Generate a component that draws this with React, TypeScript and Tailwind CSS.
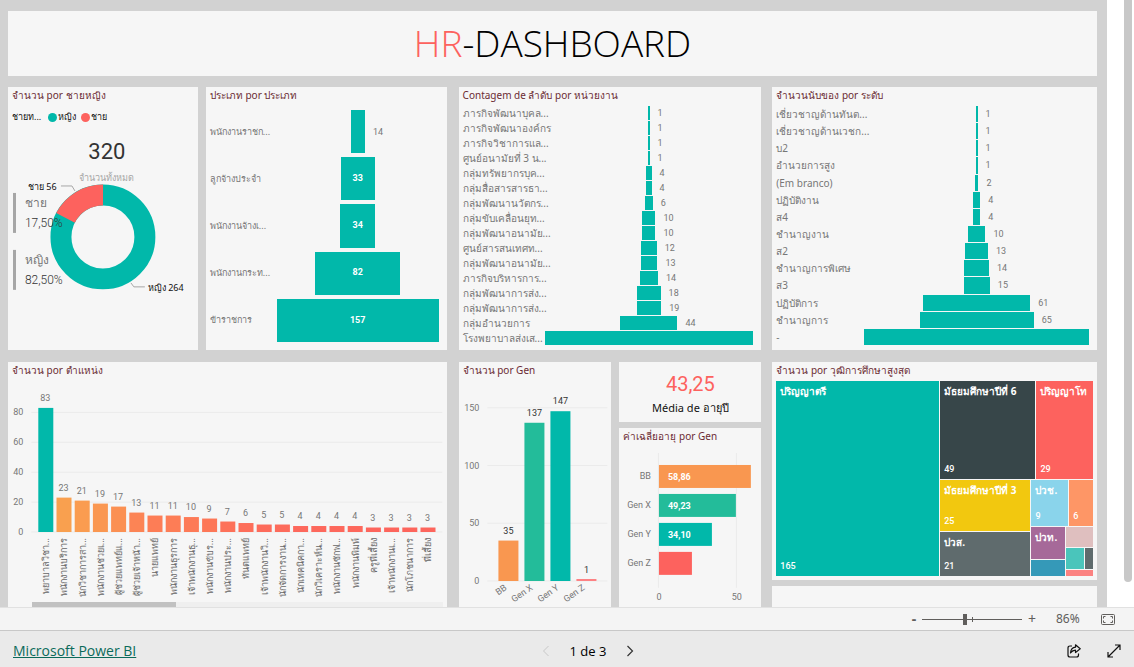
import type { ReactNode } from 'react';

const SANS = "font-['Noto_Sans','Open_Sans',sans-serif]";

type Row = { label: string; value: number; inside?: boolean; hideValue?: boolean };

const employeeTypes: Row[] = [
  { label: 'พนักงานราชก...', value: 14 },
  { label: 'ลูกจ้างประจำ', value: 33, inside: true },
  { label: 'พนักงานจ้างเ...', value: 34, inside: true },
  { label: 'พนักงานกระท...', value: 82, inside: true },
  { label: 'ข้าราชการ', value: 157, inside: true },
];

const departments: Row[] = [
  { label: 'ภารกิจพัฒนาบุคล...', value: 1 },
  { label: 'ภารกิจพัฒนาองค์กร', value: 1 },
  { label: 'ภารกิจวิชาการแล...', value: 1 },
  { label: 'ศูนย์อนามัยที่ 3 น...', value: 1 },
  { label: 'กลุ่มทรัพยากรบุค...', value: 4 },
  { label: 'กลุ่มสื่อสารสารธา...', value: 4 },
  { label: 'กลุ่มพัฒนานวัตกร...', value: 6 },
  { label: 'กลุ่มขับเคลื่อนยุท...', value: 10 },
  { label: 'กลุ่มพัฒนาอนามัย...', value: 10 },
  { label: 'ศูนย์สารสนเทศท...', value: 12 },
  { label: 'กลุ่มพัฒนาอนามัย...', value: 13 },
  { label: 'ภารกิจบริหารการ...', value: 14 },
  { label: 'กลุ่มพัฒนาการส่ง...', value: 18 },
  { label: 'กลุ่มพัฒนาการส่ง...', value: 19 },
  { label: 'กลุ่มอำนวยการ', value: 44 },
  { label: 'โรงพยาบาลส่งเส...', value: 161, hideValue: true },
];

const levels: Row[] = [
  { label: 'เชี่ยวชาญด้านทันต...', value: 1 },
  { label: 'เชี่ยวชาญด้านเวชก...', value: 1 },
  { label: 'บ2', value: 1 },
  { label: 'อำนวยการสูง', value: 1 },
  { label: '(Em branco)', value: 2 },
  { label: 'ปฏิบัติงาน', value: 4 },
  { label: 'ส4', value: 4 },
  { label: 'ชำนาญงาน', value: 10 },
  { label: 'ส2', value: 13 },
  { label: 'ชำนาญการพิเศษ', value: 14 },
  { label: 'ส3', value: 15 },
  { label: 'ปฏิบัติการ', value: 61 },
  { label: 'ชำนาญการ', value: 65 },
  { label: '-', value: 128, hideValue: true },
];

const positions: [string, number, string][] = [
  ['พยาบาลวิชา...', 83, '#01b8aa'],
  ['พนักงานบริการ', 23, '#f9a04f'],
  ['นักวิชาการสา...', 21, '#fa9c50'],
  ['พนักงานช่วยเ...', 19, '#fa9751'],
  ['ผู้ช่วยแพทย์แ...', 17, '#fb9052'],
  ['ผู้ช่วยเจ้าหน้า...', 13, '#fc8455'],
  ['นายแพทย์', 11, '#fd7d56'],
  ['พนักงานธุรการ', 11, '#fd7d56'],
  ['เจ้าพนักงานธุ...', 10, '#fd7a57'],
  ['พนักงานขับร...', 9, '#fd7757'],
  ['พนักงานประ...', 7, '#fd7159'],
  ['ทันตแพทย์', 6, '#fd6e5a'],
  ['เจ้าพนักงานวิ...', 5, '#fd6b5b'],
  ['นักจัดการงาน...', 5, '#fd6b5b'],
  ['นักเทคนิคกา...', 4, '#fd685c'],
  ['นักวิเคราะห์น...', 4, '#fd685c'],
  ['พนักงานซักฟ...', 4, '#fd685c'],
  ['พนักงานพิมพ์', 4, '#fd685c'],
  ['ครูพี่เลี้ยง', 3, '#fd655c'],
  ['เจ้าพนักงานเ...', 3, '#fd655c'],
  ['นักโภชนาการ', 3, '#fd655c'],
  ['พี่เลี้ยง', 3, '#fd655c'],
];

function Card({ title, className = '', children }: { title?: string; className?: string; children?: ReactNode }) {
  return (
    <section className={`flex min-w-0 flex-col bg-[#f6f6f6] ${className}`}>
      {title && <h2 className="h-4 shrink-0 whitespace-nowrap pl-1 text-[10px] leading-4 text-[#6b2b33]">{title}</h2>}
      {children}
    </section>
  );
}

function Funnel({ rows, labelClass, gapClass }: { rows: Row[]; labelClass: string; gapClass: string }) {
  const max = Math.max(...rows.map((r) => r.value));
  return (
    <ul className={`flex min-h-0 flex-1 flex-col pl-1 pr-2 ${gapClass}`}>
      {rows.map((r, i) => (
        <li key={i} className="flex min-h-0 flex-1 items-stretch">
          <span className={`flex shrink-0 items-center whitespace-nowrap leading-3 text-[#777] ${labelClass}`}>{r.label}</span>
          <div className="flex min-w-0 flex-1 justify-center">
            <div className="relative flex items-center justify-center bg-[#01b8aa]" style={{ width: `${(r.value / max) * 100}%` }}>
              {r.inside && <span className="font-['Roboto'] text-[9px] font-bold text-white">{r.value}</span>}
              {!r.inside && !r.hideValue && (
                <span className="absolute left-full pl-2 font-['Roboto'] text-[9px] leading-3 text-[#777]">{r.value}</span>
              )}
            </div>
          </div>
        </li>
      ))}
    </ul>
  );
}

function Donut() {
  const cx = 95, cy = 91, r = 42;
  const c = 2 * Math.PI * r;
  return (
    <svg viewBox="0 0 190 178" className="w-full" role="img" aria-label="ชาย 56, หญิง 264">
      <circle cx={cx} cy={cy} r={r} fill="none" stroke="#01b8aa" strokeWidth="21" />
      <circle cx={cx} cy={cy} r={r} fill="none" stroke="#fd625e" strokeWidth="21" strokeDasharray={`${c * 0.175} ${c}`} transform={`rotate(${-90 - 63} ${cx} ${cy})`} />
      <path d="M53 40H64L67 45M123 137L126 141H137" fill="none" stroke="#a6a6a6" />
      <text x="20" y="44" fontSize="9" fill="#111">ชาย 56</text>
      <text x="140" y="145" fontSize="9" fill="#111">หญิง 264</text>
      <rect x="5" y="47" width="3" height="40" fill="#a6a6a6" />
      <rect x="5" y="104" width="3" height="40" fill="#a6a6a6" />
      <text x="17" y="61" fontSize="12" fill="#777">ชาย</text>
      <text x="17" y="81" fontSize="12" fill="#333" fontFamily="Roboto" fontWeight="300">17,50%</text>
      <text x="17" y="118" fontSize="12" fill="#777">หญิง</text>
      <text x="17" y="138" fontSize="12" fill="#333" fontFamily="Roboto" fontWeight="300">82,50%</text>
    </svg>
  );
}

function PositionChart() {
  const base = 154, unit = 1.495;
  return (
    <svg viewBox="0 0 438 223" className="w-full" role="img" aria-label="จำนวน por ตำแหน่ง">
      {[0, 20, 40, 60, 80].map((v) => (
        <g key={v}>
          <path d={`M23 ${base - v * unit}H434`} stroke="#ebebeb" />
          <text x="15" y={base - v * unit + 3} textAnchor="end" fontSize="9" fontFamily="Roboto" fill="#777">{v}</text>
        </g>
      ))}
      {positions.map(([label, v, color], i) => {
        const x = 30 + i * 18.2;
        const h = v * unit;
        return (
          <g key={i}>
            <rect x={x} y={base - h} width="15" height={h} fill={color} />
            <text x={x + 7} y={base - h - 7} textAnchor="middle" fontSize="9" fontFamily="Roboto" fill="#777">{v}</text>
            <text transform={`translate(${x + 11} 160) rotate(-90)`} textAnchor="end" fontSize="9" fill="#666">{label}</text>
          </g>
        );
      })}
    </svg>
  );
}

function GenChart() {
  const base = 203, unit = 1.155;
  const bars: [string, number, string][] = [['BB', 35, '#f99750'], ['Gen X', 137, '#23bc9a'], ['Gen Y', 147, '#01b8aa'], ['Gen Z', 1, '#fd8284']];
  return (
    <svg viewBox="0 0 152 229" className="w-full" role="img" aria-label="จำนวน por Gen">
      {[0, 50, 100, 150].map((v) => (
        <g key={v}>
          <path d={`M28 ${base - v * unit}H148`} stroke="#ebebeb" />
          <text x="20" y={base - v * unit + 3} textAnchor="end" fontSize="9" fontFamily="Roboto" fill="#777">{v}</text>
        </g>
      ))}
      {bars.map(([label, v, color], i) => {
        const x = 39 + i * 26;
        return (
          <g key={label}>
            <rect x={x} y={base - Math.max(v * unit, 2)} width="20" height={Math.max(v * unit, 2)} fill={color} />
            <text x={x + 10} y={base - v * unit - 7} textAnchor="middle" fontSize="9" fontFamily="Roboto" fill="#333">{v}</text>
            <text transform={`translate(${x + 9} 211) rotate(-35)`} textAnchor="end" fontSize="9" fill="#777" fontFamily="Roboto">{label}</text>
          </g>
        );
      })}
    </svg>
  );
}

function AgeChart() {
  const bars: [string, string, number, string][] = [
    ['BB', '58,86', 92, '#f99750'],
    ['Gen X', '49,23', 77, '#23bc9a'],
    ['Gen Y', '34,10', 53, '#01b8aa'],
    ['Gen Z', '', 33, '#fd625e'],
  ];
  return (
    <svg viewBox="0 0 142 163" className="w-full" role="img" aria-label="ค่าเฉลี่ยอายุ por Gen">
      <path d="M39.5 9V144M117.500 9V144" stroke="#ebebeb" />
      {bars.map(([label, value, w, color], i) => (
        <g key={label}>
          <text x="32" y={35 + i * 29} textAnchor="end" fontSize="9" fontFamily="Roboto" fill="#777">{label}</text>
          <rect x="40" y={21 + i * 29} width={w} height="23" fill={color} />
          <text x="49" y={36 + i * 29} fontSize="9" fontWeight="700" fontFamily="Roboto" fill="#fff">{value}</text>
        </g>
      ))}
      <text x="40" y="156" textAnchor="middle" fontSize="9" fontFamily="Roboto" fill="#777">0</text>
      <text x="118" y="156" textAnchor="middle" fontSize="9" fontFamily="Roboto" fill="#777">50</text>
    </svg>
  );
}

function Tile({ name, value, className }: { name?: string; value?: number; className: string }) {
  return (
    <div className={`flex min-h-0 min-w-0 flex-col ${className}`}>
      <div className="flex h-0 min-h-full w-0 min-w-full flex-1 flex-col justify-between whitespace-nowrap p-1 text-[9px] leading-3 text-white">
        <span className="text-[10px] font-bold">{name}</span>
        <span className="font-['Roboto'] font-medium">{value}</span>
      </div>
    </div>
  );
}

function Treemap() {
  return (
    <div className="mx-1 mt-[3px] mb-1 flex min-h-0 flex-1 gap-px">
      <Tile name="ปริญญาตรี" value={165} className="flex-[163] bg-[#01b8aa]" />
      <div className="flex min-w-0 flex-[153] flex-col gap-px">
        <div className="flex min-h-0 flex-[98] gap-px">
          <Tile name="มัธยมศึกษาปีที่ 6" value={49} className="flex-[96] bg-[#374649]" />
          <Tile name="ปริญญาโท" value={29} className="flex-[57] bg-[#fd625e]" />
        </div>
        <div className="flex min-h-0 flex-[97] gap-px">
          <div className="flex min-w-0 flex-[91] flex-col gap-px">
            <Tile name="มัธยมศึกษาปีที่ 3" value={25} className="flex-[52] bg-[#f2c80f]" />
            <Tile name="ปวส." value={21} className="flex-[44] bg-[#5f6b6d]" />
          </div>
          <div className="flex min-w-0 flex-[62] flex-col gap-px">
            <div className="flex min-h-0 flex-[47] gap-px">
              <Tile name="ปวช." value={9} className="flex-[37] bg-[#8ad4eb]" />
              <Tile value={6} className="flex-[24] bg-[#fe9666]" />
            </div>
            <div className="flex min-h-0 flex-[50] gap-px">
              <div className="flex min-w-0 flex-[34] flex-col gap-px">
                <Tile name="ปวท." className="flex-[33] bg-[#a66999]" />
                <div className="flex-[16] bg-[#3599b8]" />
              </div>
              <div className="flex min-w-0 flex-[27] flex-col gap-px">
                <div className="flex-[21] bg-[#dfbfbf]" />
                <div className="flex flex-[21] gap-px">
                  <div className="flex-[17] bg-[#4ac5bb]" />
                  <div className="flex-[8] bg-[#5f6b6d]" />
                </div>
                <div className="flex-[6] bg-[#fb8281]" />
              </div>
            </div>
          </div>
        </div>
      </div>
    </div>
  );
}

function Report() {
  return (
    <div className="flex min-w-0 flex-1 flex-col bg-[#d2d2d2] pt-[11px] pr-2.5 pl-2">
      <header className="flex h-[65px] shrink-0 items-center justify-center bg-[#f6f6f6] pb-0.5">
        <h1 className="font-['Open_Sans'] text-[37px] leading-none font-light text-black">
          <span className="text-[#fd625e]">HR</span>-DASHBOARD
        </h1>
      </header>
      <div className="mt-[11px] flex">
        <div className="flex min-w-0 flex-[439] flex-col gap-3">
          <div className="flex h-[263px] gap-2">
            <Card title="จำนวน por ชายหญิง" className="flex-[190]">
              <div className="mt-2 flex items-center gap-px pl-1 text-[9px] leading-3 text-[#111]">
                <span className="mr-1.5">ชายท...</span>
                <span className="size-[9px] rounded-full bg-[#01b8aa]" />
                <span className="mr-1">หญิง</span>
                <span className="size-[9px] rounded-full bg-[#fd625e]" />
                <span>ชาย</span>
              </div>
              <p className="mt-[17px] pl-2 text-center font-['Roboto'] text-[22px] leading-6 text-[#333]">320</p>
              <p className="mt-1 -mb-[42px] pl-2 text-center text-[9px] leading-5 text-[#a6a6a6]">จำนวนทั้งหมด</p>
              <Donut />
            </Card>
            <Card title="ประเภท por ประเภท" className="flex-[241]">
              <div className="flex min-h-0 flex-1 pt-[7px] pb-2">
                <Funnel rows={employeeTypes} labelClass="w-[67px] text-[9px]" gapClass="w-full gap-1" />
              </div>
            </Card>
          </div>
          <Card title="จำนวน por ตำแหน่ง" className="h-[245px]">
            <PositionChart />
            <div className="mt-px mr-1 ml-6 h-[5px] bg-[#efefef]">
              <div className="h-full w-[35%] bg-[#c1c1c1]" />
            </div>
          </Card>
        </div>
        <div className="ml-3 flex min-w-0 flex-[303] flex-col gap-3">
          <Card title="Contagem de ลำดับ por หน่วยงาน" className="h-[263px]">
            <div className="flex min-h-0 flex-1 pt-[3px] pb-[5px]">
              <Funnel rows={departments} labelClass="w-[82px] text-[10px]" gapClass="w-full gap-px" />
            </div>
          </Card>
          <div className="flex h-[245px] gap-2">
            <Card title="จำนวน por Gen" className="flex-[153]">
              <GenChart />
            </Card>
            <div className="flex min-w-0 flex-[142] flex-col gap-1.5">
              <Card className="h-[60px] items-center justify-center pt-2">
                <p className="font-['Roboto'] text-xl leading-6 text-[#fd625e]">43,25</p>
                <p className="text-[11px] leading-6 text-[#111]">Média de อายุปี</p>
              </Card>
              <Card title="ค่าเฉลี่ยอายุ por Gen" className="flex-1">
                <AgeChart />
              </Card>
            </div>
          </div>
        </div>
        <div className="ml-[11px] flex min-w-0 flex-[325] flex-col gap-3">
          <Card title="จำนวนนับของ por ระดับ" className="h-[263px]">
            <div className="flex min-h-0 flex-1 pt-[3px] pb-[5px]">
              <Funnel rows={levels} labelClass="w-[88px] text-[10px]" gapClass="w-full gap-px" />
            </div>
          </Card>
          <div className="flex h-[245px] flex-col gap-1.5">
            <Card title="จำนวน por วุฒิการศึกษาสูงสุด" className="h-[218px]">
              <Treemap />
            </Card>
            <Card className="flex-1" />
          </div>
        </div>
      </div>
    </div>
  );
}

export default function App() {
  return (
    <div className={`flex h-screen flex-col bg-white ${SANS}`}>
      <main className="flex min-h-0 flex-1 overflow-hidden">
        <Report />
        <div className="flex w-[27px] shrink-0 justify-end pr-0.5">
          <div className="mb-[25px] w-2 rounded-b-full bg-[#c8c8c8]" />
        </div>
      </main>
      <div className="flex h-6 shrink-0 items-center justify-end border-y border-t-[#e1e1e1] border-b-[#c8c8c8] bg-[#f4f4f4] pr-[19px] text-[#605e5c]">
        <button type="button" aria-label="Reduzir" className="w-4 text-center text-sm leading-4 font-bold">-</button>
        <svg viewBox="0 0 100 12" className="h-3 w-[100px]" role="img" aria-label="Zoom">
          <path d="M0 6.500H100M50.500 4V9" stroke="#605e5c" fill="none" />
          <rect x="41" y="1" width="4" height="11" fill="#605e5c" />
        </svg>
        <button type="button" aria-label="Ampliar" className="ml-1 w-3 text-center text-sm leading-4">+</button>
        <span className="ml-[18px] w-7 text-xs leading-4">86%</span>
        <button type="button" aria-label="Ajustar" className="ml-[17px]">
          <svg viewBox="0 0 14 11" className="h-[11px] w-3.5" fill="none" stroke="#605e5c">
            <rect x="0.500" y="0.500" width="13" height="10" rx="1" />
            <path d="M4.500 2.500H2.500V4.500M9.500 2.500H11.500V4.500M4.500 8.500H2.500V6.500M9.500 8.500H11.500V6.500" />
          </svg>
        </button>
      </div>
      <footer className="grid h-9 shrink-0 grid-cols-[1fr_auto_1fr] items-center bg-[#eaeaea] pt-1 pr-[13px] pl-[13px] font-['Open_Sans',sans-serif]">
        <a href="#powerbi" className="justify-self-start text-sm leading-5 text-[#0b6a5a] underline">Microsoft Power BI</a>
        <nav className="flex items-center gap-5 pl-[42px] text-[13px] leading-5 font-medium text-black">
          <button type="button" aria-label="Anterior">
            <svg viewBox="0 0 8 12" className="h-3 w-2" fill="none" stroke="#c8c8c8"><path d="M6.500 1L1.500 6L6.500 11" /></svg>
          </button>
          <span>1 de 3</span>
          <button type="button" aria-label="Próxima">
            <svg viewBox="0 0 8 12" className="h-3 w-2" fill="none" stroke="#333" strokeWidth="1.200"><path d="M1.500 1L6.500 6L1.500 11" /></svg>
          </button>
        </nav>
        <div className="flex items-center gap-[26px] justify-self-end">
          <button type="button" aria-label="Compartilhar">
            <svg viewBox="0 0 14 14" className="size-3.5" fill="none" stroke="#111" strokeWidth="1.200" strokeLinejoin="round">
              <path d="M5 2H3Q1 2 1 4V11Q1 13 3 13H9.500Q11.500 13 11.500 11V9.500" />
              <path d="M8.500 0.800V3.200Q4 3.500 3.500 9Q5.500 6.200 8.500 6.200V8.600L13.200 4.700Z" />
            </svg>
          </button>
          <button type="button" aria-label="Tela cheia">
            <svg viewBox="0 0 14 14" className="size-3.5" fill="none" stroke="#111" strokeWidth="1.200">
              <path d="M1 13L13 1M8 1H13V6M1 8V13H6" />
            </svg>
          </button>
        </div>
      </footer>
    </div>
  );
}
